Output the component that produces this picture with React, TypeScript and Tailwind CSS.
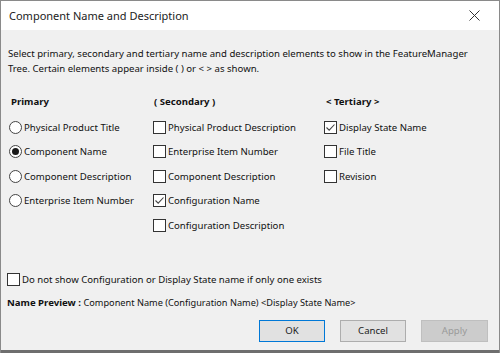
const font = { fontFamily: '"Noto Sans", "Open Sans", sans-serif' };

function Radio({ checked }: { checked?: boolean }) {
  return (
    <span className="flex h-[13px] w-[13px] shrink-0 items-center justify-center rounded-full border border-[#444] bg-white">
      {checked && <span className="h-[7px] w-[7px] rounded-full bg-[#1a1a1a]" />}
    </span>
  );
}

function Check({ checked }: { checked?: boolean }) {
  return (
    <span className="flex h-[13px] w-[13px] shrink-0 items-center justify-center border border-[#333] bg-white">
      {checked && (
        <svg width="11" height="11" viewBox="0 0 11 11">
          <path d="M1.5 5.5 L4.2 8.2 L9.5 2.5" fill="none" stroke="#444" strokeWidth="1.1" />
        </svg>
      )}
    </span>
  );
}

function Row({ children }: { children: React.ReactNode }) {
  return <div className="flex h-[24.5px] items-center gap-[2px] whitespace-nowrap">{children}</div>;
}

export default function App() {
  return (
    <div
      className="flex h-[353px] w-[500px] flex-col overflow-hidden border border-b-0 border-[#8a8a8a] bg-[#f0f0f0] text-[9.6px] leading-[15px] text-[#111]"
      style={font}
    >
      <div className="flex h-[29px] shrink-0 items-center justify-between bg-white pl-[8px] pr-[19px]">
        <span className="text-[11px] text-[#222]">Component Name and Description</span>
        <svg width="11" height="11" viewBox="0 0 11 11">
          <path d="M0.5 0.5 L10.5 10.5 M10.5 0.5 L0.5 10.5" stroke="#333" strokeWidth="1" />
        </svg>
      </div>

      <div className="whitespace-nowrap pl-[7px] pt-[16px]">
        <p>Select primary, secondary and tertiary name and description elements to show in the FeatureManager</p>
        <p>Tree. Certain elements appear inside ( ) or &lt; &gt; as shown.</p>
      </div>

      <div className="mt-[18px] flex pl-[8px]">
        <div className="w-[144px]">
          <div className="mb-[6px] pl-[2px] font-bold">Primary</div>
          <Row><Radio /><span>Physical Product Title</span></Row>
          <Row><Radio checked /><span>Component Name</span></Row>
          <Row><Radio /><span>Component Description</span></Row>
          <Row><Radio /><span>Enterprise Item Number</span></Row>
        </div>
        <div className="w-[171px]">
          <div className="mb-[6px] pl-[1px] font-bold">( Secondary )</div>
          <Row><Check /><span>Physical Product Description</span></Row>
          <Row><Check /><span>Enterprise Item Number</span></Row>
          <Row><Check /><span>Component Description</span></Row>
          <Row><Check checked /><span>Configuration Name</span></Row>
          <Row><Check /><span>Configuration Description</span></Row>
        </div>
        <div>
          <div className="mb-[6px] pl-[2px] font-bold">&lt; Tertiary &gt;</div>
          <Row><Check checked /><span>Display State Name</span></Row>
          <Row><Check /><span>File Title</span></Row>
          <Row><Check /><span>Revision</span></Row>
        </div>
      </div>

      <div className="mt-[34px] flex items-center gap-[2px] whitespace-nowrap pl-[6px]">
        <Check />
        <span>Do not show Configuration or Display State name if only one exists</span>
      </div>

      <div className="mt-[8px] whitespace-nowrap pl-[6px]">
        <span className="font-bold">Name Preview :</span>{" "}
        <span className="text-[9.2px]">Component Name (Configuration Name) &lt;Display State Name&gt;</span>
      </div>

      <div className="mt-[10px] flex justify-end gap-[15px] pr-[11px]">
        <button className="h-[22px] w-[66px] border border-[#0078d7] bg-[#e1e1e1] text-[9.6px] text-[#222]">OK</button>
        <button className="h-[22px] w-[66px] border border-[#adadad] bg-[#e1e1e1] text-[9.6px] text-[#222]">Cancel</button>
        <button className="h-[22px] w-[67px] border border-[#bfbfbf] bg-[#cccccc] text-[9.6px] text-[#9a9a9a]">Apply</button>
      </div>

      <div className="mt-auto h-[3px] bg-[#6e6e6e]" />
    </div>
  );
}
